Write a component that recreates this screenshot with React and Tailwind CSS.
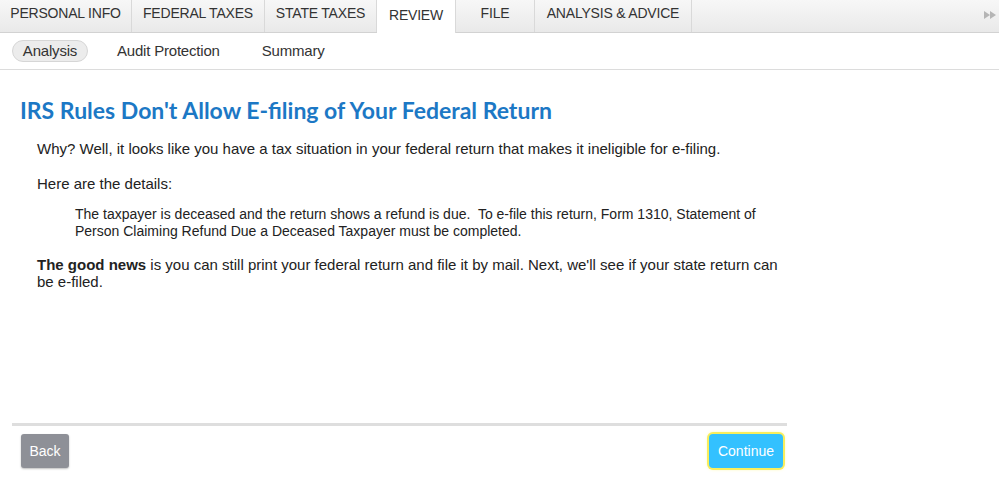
const tabs = [
  { label: "PERSONAL INFO", w: "w-[132px]" },
  { label: "FEDERAL TAXES", w: "w-[133px]" },
  { label: "STATE TAXES", w: "w-[112px]" },
  { label: "REVIEW", w: "w-[79px]", active: true },
  { label: "FILE", w: "w-[79px]" },
  { label: "ANALYSIS & ADVICE", w: "w-[157px]" },
];

export default function App() {
  return (
    <div className="w-[999px] h-[481px] bg-white overflow-hidden font-['Liberation_Sans',Arial,sans-serif]">
      {/* top tabs */}
      <div className="flex h-[33px] bg-gradient-to-b from-[#f7f7f7] to-[#e9e9e9] border-b border-[#d2d2d2]">
        {tabs.map((t) => (
          <div
            key={t.label}
            className={
              t.w +
              " flex items-start justify-center text-[14px] tracking-[-0.2px] border-r border-[#d9d9d9] text-[#333] " +
              (t.active ? "bg-white h-[33px] pt-[5px]" : "pt-[3px]")
            }
          >
            {t.label}
          </div>
        ))}
        <div className="flex-1 flex justify-end items-start pt-[11px] pr-[3px]">
          <svg width="12" height="8" viewBox="0 0 12 8">
            <path d="M0 0 L6 4 L0 8 Z M6 0 L12 4 L6 8 Z" fill="#b5b5b5" />
          </svg>
        </div>
      </div>

      {/* sub tabs */}
      <div className="flex items-center h-[37px] border-b border-[#dcdcdc] text-[15px] text-[#333] tracking-[-0.2px]">
        <div className="ml-[12px] w-[76px] h-[22px] rounded-full bg-[#ececec] border border-[#d6d6d6] flex items-center justify-center">
          Analysis
        </div>
        <div className="ml-[29px]">Audit Protection</div>
        <div className="ml-[42px]">Summary</div>
      </div>

      {/* content */}
      <div className="w-[775px] ml-[12px] h-[353px] pt-[26px]">
        <h1 className="pl-[8px] text-[23px] leading-[28px] font-bold text-[#1c78c5] font-['Lato',sans-serif]">
          IRS Rules Don't Allow E-filing of Your Federal Return
        </h1>
        <div className="pl-[25px] pr-[3px] pt-[16px] text-[15px] leading-[17px] text-[#222]">
          <p>Why? Well, it looks like you have a tax situation in your federal return that makes it ineligible for e-filing.</p>
          <p className="mt-[18px]">Here are the details:</p>
          <p className="mt-[14px] pl-[38px] text-[14px]">
            The taxpayer is deceased and the return shows a refund is due.&nbsp; To e-file this return, Form 1310, Statement of Person Claiming Refund Due a Deceased Taxpayer must be completed.
          </p>
          <p className="mt-[16px]">
            <b>The good news</b> is you can still print your federal return and file it by mail. Next, we'll see if your state return can be e-filed.
          </p>
        </div>
      </div>

      {/* footer */}
      <div className="w-[775px] ml-[12px] border-t-[3px] border-[#dedede] flex justify-between pt-[8px]">
        <button className="ml-[9px] w-[48px] h-[34px] rounded-[3px] bg-[#8e9097] text-white text-[14px] shadow-[0_1px_2px_rgba(0,0,0,0.25)]">
          Back
        </button>
        <button className="mr-[4px] w-[74px] h-[34px] rounded-[4px] bg-[#33c1ff] text-white text-[14px] ring-2 ring-[#f8ee5c] shadow-[0_0_4px_#f8ee5c]">
          Continue
        </button>
      </div>
    </div>
  );
}
